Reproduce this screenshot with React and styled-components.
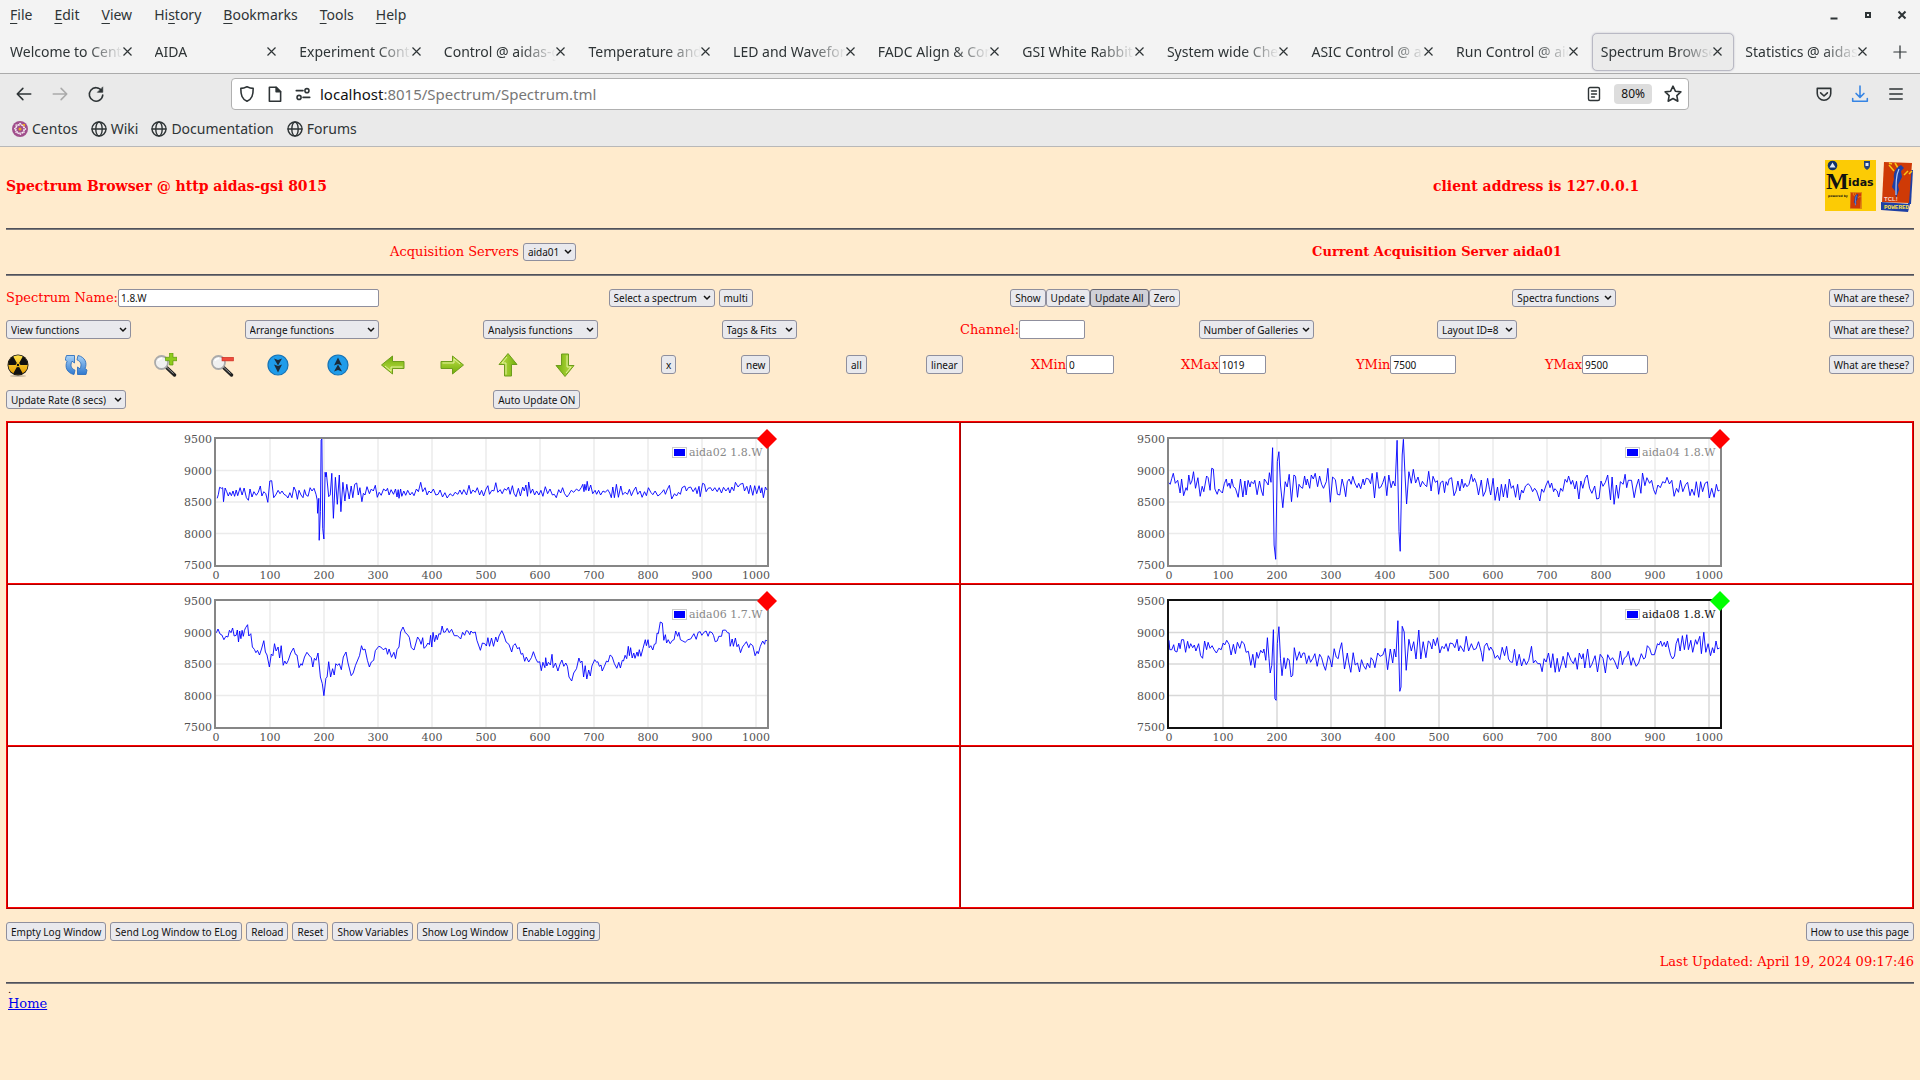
import React from "react";
import styled, { createGlobalStyle } from "styled-components";

const UI = '"Noto Sans", "Open Sans", sans-serif';
const PAGE = '"DejaVu Serif", "Liberation Serif", serif';

const Global = createGlobalStyle`
  * { box-sizing: border-box; }
  html, body { margin: 0; background: #ffebcd; }
  body { font-family: ${PAGE}; font-size: 13px; line-height: 16px; color: #f00; }
  button, input, select { font-family: ${UI}; margin: 0; }
`;

/* ---------- browser chrome ---------- */
const Chrome = styled.header`
  background: #f3f3f3;
  color: #2e3436;
  font: 14px/20px ${UI};
`;
const MenuBar = styled.div`
  display: flex;
  align-items: center;
  justify-content: space-between;
  height: 30px;
  padding: 0 10px 1px;
`;
const Group = styled.div`
  display: flex;
  align-items: center;
  gap: ${(p) => p.$gap ?? 4}px;
`;
const PlainButton = styled.button`
  border: 0;
  padding: 0;
  background: none;
  color: ${(p) => p.$color || "inherit"};
  font: inherit;
  display: flex;
  align-items: center;
  justify-content: center;
  gap: 4px;
  u { text-underline-offset: 3px; }
`;
const TabStrip = styled.div`
  display: flex;
  align-items: center;
  height: 43px;
`;
const Tab = styled.div`
  flex: 1;
  min-width: 0;
  display: flex;
  align-items: center;
  height: 38px;
  margin: 0 1px;
  padding: 0 11px 0 8px;
  border: 1px solid ${(p) => (p.$active ? "#b9b9c4" : "transparent")};
  border-radius: 5px;
  background: ${(p) => (p.$active ? "#ebebeb" : "transparent")};
  box-shadow: ${(p) => (p.$active ? "0 0 2px #b9b9c4" : "none")};
`;
const TabLabel = styled.span`
  flex: 1;
  overflow: hidden;
  white-space: nowrap;
  mask-image: linear-gradient(to left, transparent, #000 36px);
`;
const NewTab = styled(PlainButton)`
  width: 40px;
`;
const NavBar = styled.div`
  display: grid;
  grid-template-columns: 216px 1fr 216px;
  align-items: center;
  height: 40px;
  padding: 0 15px;
  background: #eaeaea;
  border-top: 1px solid #ababab;
`;
const NavRight = styled.div`
  display: flex;
  justify-content: flex-end;
  gap: 18px;
`;
const UrlBox = styled.div`
  display: flex;
  align-items: center;
  gap: 8px;
  height: 32px;
  padding: 0 6px;
  background: #fff;
  border: 1px solid #b0b0b0;
  border-radius: 4px;
`;
const UrlText = styled.span`
  flex: 1;
  font-size: 15px;
  color: #777;
  b { color: #111; font-weight: 400; }
`;
const ZoomLevel = styled.button`
  border: 0;
  border-radius: 4px;
  padding: 0 7px;
  height: 20px;
  background: #ddd;
  font-size: 12px;
  color: #111;
`;
const Bookmarks = styled.nav`
  display: flex;
  align-items: center;
  gap: 13px;
  height: 34px;
  padding: 0 12px 1px;
  background: #eaeaea;
  border-bottom: 1px solid #b8b8b8;
`;
const Bookmark = styled.a`
  display: flex;
  align-items: center;
  gap: 4px;
  color: inherit;
  text-decoration: none;
`;

/* ---------- page ---------- */
const Page = styled.main`
  padding: 13px 6px 0;
`;
const Title = styled.h1`
  margin: 0;
  font-size: 14px;
  line-height: 20px;
`;
const TitleRow = styled.div`
  display: grid;
  grid-template-columns: 1427fr 481fr;
  align-items: center;
  height: 52px;
  margin-bottom: 16px;
`;
const Spread = styled.div`
  display: flex;
  align-items: center;
  justify-content: space-between;
`;
const Rule = styled.hr`
  height: 2px;
  margin: 0;
  border: 0;
  border-top: 1px solid #50515a;
  border-bottom: 1px solid #7c7a7c;
`;
const ServerRow = styled.div`
  display: grid;
  grid-template-columns: 1fr 1fr;
  place-items: center;
  height: 44px;
`;
const Row = styled.div`
  display: grid;
  grid-template-columns: ${(p) => p.$cols};
  align-items: center;
  height: ${(p) => p.$h}px;
`;
const End = styled.div`
  display: flex;
  justify-content: flex-end;
`;
const Button = styled.button`
  height: ${(p) => p.$h || 19}px;
  padding: 0 4px;
  white-space: nowrap;
  font-size: 10px;
  line-height: 14px;
  color: #111;
  background: ${(p) => (p.$active ? "#d0d0d7" : "#e9e9ed")};
  border: 1px solid ${(p) => (p.$active ? "#676774" : "#8f8f9d")};
  border-radius: 3px;
`;
const SelectWrap = styled.span`
  display: inline-grid;
  align-items: center;
  width: ${(p) => p.$w}px;
  > * { grid-area: 1 / 1; }
  > svg { justify-self: end; margin-right: 4px; pointer-events: none; }
`;
const SelectBox = styled.select`
  appearance: none;
  width: 100%;
  height: ${(p) => p.$h || 19}px;
  padding: 0 4px;
  font-size: 10px;
  line-height: 14px;
  color: #111;
  background: #e9e9ed;
  border: 1px solid #8f8f9d;
  border-radius: 3px;
`;
const Field = styled.label`
  display: flex;
  align-items: center;
  white-space: nowrap;
`;
const Input = styled.input`
  width: ${(p) => p.$w}px;
  height: ${(p) => p.$h || 19}px;
  padding: 0 2px;
  font-size: 10px;
  color: #111;
  background: #fff;
  border: 1px solid #8f8f9d;
  border-radius: 2px;
`;
const Gallery = styled.table`
  width: 100%;
  margin-top: 12px;
  table-layout: fixed;
  border-spacing: 0;
  background: #fff;
  border: 1px solid;
  border-color: #f00 #a00 #a00 #f00;
`;
const Cell = styled.td`
  height: 162px;
  padding: 0;
  border: 1px solid;
  border-color: #a00 #f00 #f00 #a00;
`;
const Plot = styled.svg`
  display: block;
  width: 600px;
  height: 160px;
  margin: 0 auto;
  font: 11px ${PAGE};
`;
const LogRow = styled(Spread)`
  margin-top: 13px;
`;
const Updated = styled.p`
  margin: 13px 0 12px;
  text-align: right;
`;
const Foot = styled.footer`
  padding: 1px 2px;
  color: #000;
  a { display: block; color: #00e; }
`;
const Dot = styled.div`
  height: 11px;
  font-size: 10px;
  line-height: 10px;
`;

/* ---------- small drawings ---------- */
const Ico = ({ children, s = 18, w = 1.4 }) => (
  <svg width={s} height={s} viewBox="0 0 16 16" fill="none" stroke="currentColor" strokeWidth={w} strokeLinecap="round" strokeLinejoin="round">{children}</svg>
);
const Cross = () => <svg width="9" height="9" viewBox="0 0 9 9" stroke="#2e3436" strokeWidth="1.2"><path d="M.5.5l8 8M8.5.5l-8 8" /></svg>;
const Globe = () => <Ico s={16} w={1.4}><circle cx="8" cy="8" r="7" /><ellipse cx="8" cy="8" rx="3.2" ry="7" /><path d="M1 8h14" /></Ico>;
const Chevron = () => <svg width="8" height="6" viewBox="0 0 8 6" fill="none" stroke="#111" strokeWidth="1.5"><path d="M1 1l3 3 3-3" /></svg>;
const CentosMark = () => (
  <svg width="16" height="16" viewBox="0 0 16 16">
    <circle cx="8" cy="8" r="8" fill="#a14f8c" />
    <g fill="none" stroke="#fff" strokeWidth="1.1" strokeDasharray="1.6 .8">
      <rect x="4" y="4" width="8" height="8" /><rect x="4" y="4" width="8" height="8" transform="rotate(45 8 8)" />
    </g>
    <circle cx="8" cy="8" r="1.5" fill="#efa724" /><path d="M10 3l3 0 0 3z" fill="#efa724" />
  </svg>
);

const DefsSvg = styled.svg`
  display: block;
`;
const Defs = () => (
  <DefsSvg width="0" height="0" aria-hidden="true">
    <defs>
      <linearGradient id="green" x1="0" y1="0" x2="0" y2="1"><stop offset="0" stopColor="#c4e04a" /><stop offset="1" stopColor="#6fae0a" /></linearGradient>
      <linearGradient id="sky" x1="0" y1="0" x2="0" y2="1"><stop offset="0" stopColor="#a9d2f7" /><stop offset="1" stopColor="#2f79cf" /></linearGradient>
      <linearGradient id="amber" x1="0" y1="0" x2="0" y2="1"><stop offset="0" stopColor="#ffe14a" /><stop offset="1" stopColor="#e39a00" /></linearGradient>
    </defs>
  </DefsSvg>
);
const GreenArrow = ({ turn }) => (
  <>
    <path d="M1 8.500h11.500V3L23.500 12l-11 9v-5.500H1z" fill="url(#green)" stroke="#6d9d1c" transform={`rotate(${turn} 12 12)`} />
    <path d="M2.500 10h11.500V6l6 5" fill="none" stroke="#e6f3a8" strokeWidth=".9" transform={`rotate(${turn} 12 12)`} />
  </>
);
const Lens = ({ sign }) => (
  <>
    <path d="M13 14l8.500 8" stroke="#222" strokeWidth="3.400" strokeLinecap="round" />
    <path d="M14 14.500l6.500 6" stroke="#bbb" strokeWidth=".8" />
    <circle cx="8.500" cy="9.500" r="6.500" fill="#f0f0f0" stroke="#aaa" strokeWidth="1.800" />
    <path d="M5 8a4 4 0 014-2.500" stroke="#fff" strokeWidth="1.500" fill="none" />
    {sign === "+"
      ? <path d="M16.500 0h3.500v4.300h4v3.400h-4V12h-3.500V7.700h-4V4.300h4z" fill="#8fcb1e" stroke="#5c9710" strokeWidth=".7" />
      : <rect x="12" y="4.300" width="11.500" height="3.600" fill="#ef4a3c" stroke="#c9281c" strokeWidth=".6" />}
  </>
);
const Disc = ({ up }) => (
  <g transform={up ? "rotate(180 12 12)" : undefined}>
    <circle cx="12" cy="12" r="10" fill="#1f9cea" stroke="#1673b5" strokeWidth="1.200" />
    <path d="M8 5.500l4 1.500 4-1.500-4 7zM8 11.500l4 1.500 4-1.500-4 8z" fill="#1b2b3a" />
  </g>
);
const TOOLS = [
  ["Clear", <g key="r"><ellipse cx="12" cy="23" rx="8" ry="1" fill="#0003" /><circle cx="12" cy="12" r="10.500" fill="#111" /><circle cx="12" cy="12" r="9.700" fill="url(#amber)" /><path d="M12 12L7.200 3.600a9.700 9.700 0 00-4.900 8.400zM12 12h9.700a9.700 9.700 0 00-4.900-8.400zM12 12l-4.800 8.400a9.700 9.700 0 009.600 0z" fill="#111" /><circle cx="12" cy="12" r="1.800" fill="#111" stroke="#f5bf10" /></g>],
  ["Refresh", <g key="f" fill="url(#sky)" stroke="#2f6fbd" strokeWidth=".9"><path d="M10 21.500C3 20 .5 14 3 8.500L1.500 7l0-1.500L2.500 2.500H10.500V10L8 8.200c-2 4-1 7.300 3 9z" /><path d="M14 2.500c7 1.500 9.500 7.500 7 13l2 1.500-1 4.500H13.500V14l2.500 1.800c2-4 1-7.300-3-9z" /></g>],
  ["Zoom in", <Lens key="i" sign="+" />],
  ["Zoom out", <Lens key="o" sign="-" />],
  ["Compress", <Disc key="c" />],
  ["Expand", <Disc key="e" up />],
  ["Left", <GreenArrow key="l" turn={180} />],
  ["Right", <GreenArrow key="g" turn={0} />],
  ["Up", <GreenArrow key="u" turn={-90} />],
  ["Down", <GreenArrow key="d" turn={90} />],
];

const Feather = () => (
  <>
    <path d="M3 2L31 3 28 43 1 42z" fill="#cf3a06" />
    <path d="M8 5l5 6M14 3l3 5M27 11l-4 4M31 11l-3 3M8 3l3 1" stroke="#f7c51a" strokeWidth="1.500" />
    <path d="M20 5c-6 3-8 9-7 14l-2 8 3 4 1 7 3-8-1-5 4-8-1-6 3-3z" fill="#1d3fa5" />
    <path d="M18 9c-3 6-3 14-3 26" stroke="#b8cdf5" strokeWidth="1.200" fill="none" />
  </>
);
const Logos = () => (
  <svg width="90" height="52" viewBox="0 0 90 52" role="img" aria-label="Midas, Tcl powered">
    <rect x="1" width="51" height="51" fill="#fccb05" />
    <circle cx="8.500" cy="5.500" r="4.800" fill="#12336b" /><path d="M5.500 7.500l3-5 3 5z" fill="#dfe8f5" />
    <path d="M40 1h6v5c0 2-2 3-3 4-1-1-3-2-3-4z" fill="#24427a" /><path d="M41.500 3h3v3h-3z" fill="#dfe8f5" />
    <text x="2" y="29" fontFamily="Liberation Serif" fontWeight="700" fontSize="24" fill="#111">M</text>
    <text x="24" y="26" fontFamily="DejaVu Sans" fontWeight="700" fontSize="11" fill="#111">idas</text>
    <text x="4" y="37" fontFamily="DejaVu Sans" fontWeight="700" fontSize="3" fill="#111">powered by</text>
    <rect x="26" y="32" width="12" height="17" fill="#e08a10" />
    <g transform="translate(26 32) scale(.36 .38)"><Feather /></g>
    <g transform="translate(57 0)">
      <path d="M29 10h3l-2 34h-3z" fill="#1d3fa5" />
      <Feather />
      <path d="M0 42l29 2-2 8L0 50z" fill="#1d3fa5" />
      <text x="3" y="41" fontFamily="Liberation Sans" fontWeight="700" fontSize="6" fill="#f6d9cf">TCL!</text>
      <text x="3" y="49" fontFamily="Liberation Mono" fontWeight="700" fontSize="6" fill="#ffe14a">POWERED</text>
    </g>
  </svg>
);

/* ---------- spectra ---------- */
const TRACES = {
  aida02: "120,250 123,238 126,217 131,220 134,218 136,260 140,219 144,230 148,243 152,232 156,242 160,228 164,244 168,225 172,242 178,218 183,240 188,219 194,248 199,256 203,222 208,246 213,230 219,241 224,232 229,213 233,243 238,230 243,236 248,262 253,198 258,197 263,248 268,240 274,226 279,236 284,228 289,238 295,242 299,249 304,233 309,248 314,216 319,228 323,253 327,226 332,240 337,248 341,224 345,240 350,244 355,218 360,228 365,220 370,238 373,255 374,295 377,250 378,376 381,290 383,75 385,72 387,340 390,372 393,172 395,186 396,172 402,245 406,240 410,175 414,310 419,187 424,268 429,180 433,290 438,202 443,258 448,208 454,252 459,213 463,248 468,208 473,204 477,240 481,218 486,260 490,235 494,240 499,215 505,236 510,222 515,228 520,211 525,247 530,232 535,241 541,222 547,228 551,220 555,240 560,224 566,238 571,222 575,246 578,224 580,250 584,222 587,244 592,228 597,241 602,226 608,240 613,232 618,242 624,222 629,230 635,202 640,230 646,218 651,240 656,228 661,234 667,222 673,240 679,238 684,225 690,246 696,233 702,249 709,236 716,243 722,232 729,238 734,225 739,238 744,224 751,240 757,211 762,236 767,225 773,232 778,218 784,240 789,226 794,243 800,222 805,212 809,238 815,226 820,228 825,203 830,232 836,224 841,236 847,221 852,226 857,216 861,238 867,212 871,235 876,245 882,220 887,243 893,216 897,228 901,210 905,244 908,201 913,235 918,222 923,240 928,228 934,240 939,226 944,244 950,215 956,236 962,222 968,240 973,238 978,248 984,224 989,234 994,218 999,236 1005,246 1010,238 1016,226 1022,232 1029,222 1035,228 1041,218 1045,208 1048,230 1050,208 1053,226 1056,199 1060,228 1065,210 1070,236 1076,226 1080,238 1085,226 1090,240 1096,228 1102,232 1108,224 1113,234 1117,248 1121,216 1125,248 1130,208 1135,247 1141,213 1146,239 1152,232 1158,238 1163,223 1168,242 1173,228 1179,216 1184,238 1190,228 1195,247 1201,230 1206,242 1211,218 1217,232 1222,239 1228,228 1235,243 1243,235 1250,224 1254,238 1258,225 1264,211 1270,252 1277,236 1282,243 1287,232 1292,238 1296,218 1303,213 1307,228 1312,218 1318,216 1324,230 1330,218 1334,236 1339,214 1342,245 1348,205 1353,208 1357,230 1362,220 1368,218 1373,228 1379,218 1385,230 1390,218 1396,234 1401,217 1407,228 1413,218 1417,234 1422,216 1427,227 1431,202 1438,216 1443,208 1450,205 1454,228 1460,214 1465,236 1469,211 1475,241 1480,212 1485,236 1491,212 1495,234 1498,218 1502,248 1507,216 1511,225",
  aida04: "124,203 127,208 131,190 135,175 140,205 146,196 152,234 156,192 161,242 167,218 170,226 174,180 178,208 182,198 186,170 191,220 197,188 203,244 208,214 212,230 219,183 223,188 228,226 232,160 236,162 240,222 246,238 250,222 254,228 259,234 264,206 269,192 272,214 276,204 279,220 283,192 287,215 292,220 299,247 305,192 311,246 316,198 319,240 324,196 329,216 332,200 338,206 341,196 347,239 353,198 358,228 362,242 365,192 370,200 375,210 378,173 382,202 386,98 390,390 394,433 398,140 402,110 406,210 412,278 418,200 423,216 428,178 434,260 440,180 444,184 449,247 453,208 457,216 462,220 467,183 471,210 474,192 480,220 484,180 489,192 494,175 500,215 505,183 510,208 515,220 522,200 526,160 532,262 538,186 545,194 550,238 556,240 562,192 567,216 571,245 575,200 580,192 585,208 589,184 594,204 600,218 604,205 609,221 615,192 618,210 623,190 629,192 634,206 638,175 644,249 650,172 655,220 660,216 665,203 670,184 675,242 680,180 686,218 691,198 696,213 701,76 706,350 709,409 714,120 717,73 721,180 725,267 731,170 737,205 742,163 748,204 754,186 760,216 765,199 770,208 776,215 781,169 787,228 792,184 798,202 803,197 806,238 811,203 817,198 821,233 825,200 829,211 833,192 839,188 845,242 850,228 855,198 860,228 865,192 869,218 873,205 878,215 883,208 889,178 893,200 897,190 902,206 907,240 914,195 919,244 925,228 930,190 935,224 938,240 944,190 949,256 955,216 960,257 965,208 970,246 975,208 980,248 985,192 990,220 995,212 1001,247 1006,208 1011,255 1016,225 1020,234 1026,213 1033,206 1039,215 1044,230 1049,220 1054,228 1062,258 1067,222 1072,232 1078,210 1083,197 1088,218 1092,204 1097,230 1100,221 1106,228 1110,246 1115,220 1120,229 1126,193 1131,202 1135,183 1141,208 1145,196 1151,222 1155,199 1161,252 1166,198 1171,220 1177,190 1182,180 1188,220 1194,235 1201,213 1206,252 1212,250 1217,198 1222,214 1228,202 1234,180 1241,255 1245,186 1250,268 1256,210 1261,250 1266,200 1273,208 1278,178 1282,218 1286,196 1294,196 1301,248 1306,216 1312,192 1318,235 1322,174 1328,212 1333,188 1340,205 1345,196 1350,224 1355,238 1361,210 1367,218 1373,200 1379,204 1384,187 1390,207 1396,196 1402,244 1408,220 1413,232 1418,196 1424,230 1431,209 1436,202 1442,242 1447,222 1453,241 1458,200 1464,247 1469,200 1474,230 1480,205 1486,200 1491,249 1497,220 1503,247 1509,208 1513,228 1517,226",
  aida06: "118,157 122,146 127,161 132,164 137,178 142,168 147,170 151,150 155,157 159,143 163,167 168,165 171,149 174,185 177,152 180,175 183,150 186,168 189,150 192,142 197,133 200,167 205,160 209,200 214,207 218,217 222,210 227,224 232,206 238,181 242,215 246,224 252,260 257,221 261,226 265,190 269,212 274,200 278,233 282,196 287,255 291,242 295,251 300,240 306,218 313,203 318,222 322,224 327,262 332,250 335,255 341,230 347,216 354,227 358,232 362,260 366,234 370,240 375,218 381,290 386,310 390,346 395,294 398,290 402,244 407,290 412,265 416,284 420,250 424,255 429,250 434,268 439,230 446,215 451,248 459,286 464,278 470,255 480,226 485,196 489,209 494,206 500,240 505,260 510,245 516,240 520,211 529,198 534,200 540,208 547,203 551,222 555,206 561,231 567,216 571,235 575,208 580,200 584,155 590,140 596,157 601,162 606,171 611,202 618,209 627,170 632,179 636,192 640,172 643,204 648,199 653,188 657,193 660,165 663,200 666,156 670,184 674,164 677,178 681,160 685,162 689,137 693,156 697,155 702,144 707,157 713,147 720,166 728,166 736,176 741,156 746,165 750,151 754,152 759,163 762,152 767,158 773,155 777,180 786,210 791,188 797,190 801,197 805,172 809,198 814,173 819,198 825,170 829,185 833,167 840,151 845,164 851,185 858,192 865,215 869,196 874,190 880,206 884,201 889,222 893,219 898,243 902,230 908,245 915,232 920,214 926,235 931,246 936,244 940,271 944,246 949,262 951,232 954,257 958,246 963,254 967,222 970,262 976,248 982,272 987,252 992,239 997,258 1002,248 1006,258 1010,290 1017,302 1022,278 1029,265 1035,233 1039,247 1043,242 1047,290 1051,256 1055,296 1060,269 1064,287 1068,257 1075,238 1080,246 1083,244 1087,258 1091,254 1094,272 1099,259 1105,242 1109,245 1114,224 1119,229 1125,250 1131,264 1136,246 1140,263 1145,240 1148,242 1152,225 1156,235 1160,198 1163,226 1166,202 1170,233 1174,218 1177,234 1182,215 1185,228 1188,208 1192,228 1197,205 1203,178 1206,196 1210,178 1213,202 1217,196 1222,209 1226,192 1230,190 1233,158 1236,160 1241,125 1246,128 1250,180 1254,163 1257,188 1261,178 1266,190 1272,180 1276,178 1280,152 1285,168 1288,156 1292,178 1298,182 1304,186 1311,178 1318,176 1326,160 1332,177 1337,156 1342,154 1346,165 1352,155 1357,152 1362,168 1366,154 1372,157 1376,166 1380,184 1385,182 1389,168 1396,168 1399,150 1406,149 1411,157 1415,158 1418,198 1423,176 1426,198 1431,173 1435,199 1439,192 1444,217 1449,200 1454,192 1459,184 1465,202 1469,190 1475,196 1481,226 1486,213 1489,220 1494,198 1500,182 1505,192 1507,180 1511,181",
  aida08: "124,180 126,208 131,208 136,193 139,212 144,215 149,188 152,205 156,178 161,178 166,216 171,183 175,204 179,190 184,202 188,194 192,212 199,190 204,226 209,234 214,182 219,208 223,186 228,204 233,196 238,208 244,218 250,204 256,208 261,188 265,194 270,180 276,192 281,224 287,192 292,220 297,186 303,204 308,183 314,190 319,216 325,213 331,255 336,222 341,262 346,216 350,234 356,210 361,218 364,206 369,240 373,172 377,235 380,278 384,255 388,148 392,355 395,360 398,190 402,139 406,235 410,286 415,232 419,265 424,234 428,239 433,290 437,285 441,202 447,240 454,214 458,233 463,218 467,218 472,250 478,226 482,246 488,234 493,220 499,258 505,222 510,232 515,254 520,270 527,226 531,236 536,260 542,205 547,230 552,235 556,208 561,187 568,266 575,218 579,248 584,276 590,217 595,254 601,248 606,275 611,238 616,256 622,267 626,248 632,262 635,232 640,240 645,262 652,218 658,228 665,224 671,204 677,268 684,206 690,248 694,206 698,230 703,121 708,333 711,320 714,138 719,155 724,270 731,177 737,212 743,184 749,236 756,149 761,236 767,184 774,232 780,182 784,186 789,206 793,176 798,196 803,172 809,218 815,198 820,205 825,190 830,213 835,188 842,190 847,202 853,177 857,212 861,196 865,204 870,214 876,168 882,212 889,190 895,208 901,205 907,184 914,216 918,243 922,198 928,188 934,210 938,200 944,212 949,234 955,225 961,238 967,201 973,226 978,198 983,236 988,245 993,246 998,207 1004,256 1010,222 1016,257 1022,235 1028,253 1034,240 1041,198 1046,248 1051,240 1057,250 1063,250 1068,274 1073,235 1078,245 1084,218 1090,262 1095,220 1101,276 1106,234 1111,274 1117,250 1121,228 1128,262 1133,216 1141,240 1147,250 1152,232 1157,267 1162,218 1168,236 1172,220 1176,263 1183,206 1189,262 1194,252 1202,226 1208,275 1215,222 1222,234 1228,278 1234,223 1241,240 1246,232 1251,242 1259,266 1266,212 1271,253 1276,233 1282,228 1286,213 1293,255 1298,232 1306,258 1312,248 1319,220 1325,236 1329,232 1334,196 1340,204 1345,223 1352,223 1360,190 1364,194 1368,182 1372,198 1377,186 1381,200 1385,182 1388,200 1393,225 1398,236 1403,227 1407,190 1412,174 1417,212 1423,166 1428,208 1434,163 1438,208 1444,180 1449,216 1456,178 1460,192 1467,168 1471,220 1477,156 1482,216 1488,190 1494,226 1499,202 1503,218 1508,182 1512,206 1517,203",
};

const LEFT = 32, TOP = 16, W = 551, H = 126;
const trace = (name, x0, y0) =>
  TRACES[name].split(" ").map((p) => {
    const [x, y] = p.split(",");
    return `${(LEFT + ((x - x0) / 1394) * W).toFixed(1)},${(TOP + ((y - y0) / 378) * H).toFixed(1)}`;
  }).join(" ");

function Spectrum({ name, label, x0, y0, selected }) {
  const frame = selected ? "#111" : "#868686";
  const grid = selected ? "#d8d8d8" : "#ebebeb";
  return (
    <Plot viewBox="0 0 600 160" role="img" aria-label={label}>
      {[...Array(10)].map((_, i) => <path key={i} d={`M${LEFT + (i + 1) * 54} ${TOP}v${H}`} stroke={grid} strokeWidth="1.500" />)}
      {[1, 2, 3].map((i) => <path key={i} d={`M${LEFT} ${TOP + i * 31.5}h${W}`} stroke={grid} strokeWidth="1.500" />)}
      <rect x={LEFT - 1} y={TOP - 1} width={W + 2} height={H + 2} fill="none" stroke={frame} strokeWidth="2" />
      <polyline points={trace(name, x0, y0)} fill="none" stroke="#00f" strokeOpacity=".9" strokeWidth="1" strokeLinejoin="round" />
      <g fill="#545454">
        {[9500, 9000, 8500, 8000, 7500].map((v, i) => <text key={v} x={LEFT - 4} y={TOP + i * 31.5 + 4} textAnchor="end">{v}</text>)}
        {[...Array(11)].map((_, i) => <text key={i} x={LEFT + i * 54} y={TOP + H + 14} textAnchor="middle">{i * 100}</text>)}
      </g>
      <rect x="488.500" y="24.500" width="14" height="10" fill="#fff" stroke="#ccc" />
      <rect x="490" y="26" width="11" height="7" fill="#00f" />
      <text x="505" y="33" fill={selected ? "#111" : "#888"}>{label}</text>
      <path d={`M${LEFT + W} 6l10 10-10 10-10-10z`} fill={selected ? "#0f0" : "#f00"} />
    </Plot>
  );
}

const Select = ({ label, w, h }) => (
  <SelectWrap $w={w}>
    <SelectBox $h={h} aria-label={label} defaultValue={label}><option>{label}</option></SelectBox>
    <Chevron />
  </SelectWrap>
);
const LabeledInput = ({ label, value = "", w, h }) => (
  <Field>{label}<Input $w={w} $h={h} defaultValue={value} /></Field>
);
const Help = ({ h }) => <End><Button $h={h}>What are these?</Button></End>;

const MENUS = [["", "F", "ile"], ["", "E", "dit"], ["", "V", "iew"], ["Hi", "s", "tory"], ["", "B", "ookmarks"], ["", "T", "ools"], ["", "H", "elp"]];
const TABS = ["Welcome to CentOS", "AIDA", "Experiment Control", "Control @ aidas-gsi", "Temperature and", "LED and Waveform", "FADC Align & Contr", "GSI White Rabbit", "System wide Check", "ASIC Control @ aid", "Run Control @ aida", "Spectrum Browser", "Statistics @ aidas-"];
const TOOL_COLS = [58, 89, 57, 56, 60, 55, 59, 56, 57, 108, 80, 105, 80, 105, 150, 175, 189, 369].map((n) => `minmax(0, ${n}fr)`).join(" ");

export default function App() {
  return (
    <>
      <Global />
      <Defs />
      <Chrome>
        <MenuBar>
          <Group $gap={22}>
            {MENUS.map(([a, b, c]) => <PlainButton key={b + c}><span>{a}<u>{b}</u>{c}</span></PlainButton>)}
          </Group>
          <Group $gap={18}>
            <PlainButton aria-label="Minimize"><Ico s={16}><path d="M4.500 11.500h7" strokeWidth="2" strokeLinecap="butt" /></Ico></PlainButton>
            <PlainButton aria-label="Maximize"><Ico s={16}><path d="M6 6h4v4H6z" strokeWidth="2" strokeLinejoin="miter" /></Ico></PlainButton>
            <PlainButton aria-label="Close"><Ico s={16}><path d="M4.500 4.500l7 7M11.500 4.500l-7 7" strokeWidth="2" strokeLinecap="butt" /></Ico></PlainButton>
          </Group>
        </MenuBar>
        <TabStrip>
          {TABS.map((t, i) => (
            <Tab key={t} $active={i === 11}><TabLabel>{t}</TabLabel><PlainButton aria-label={`Close ${t}`}><Cross /></PlainButton></Tab>
          ))}
          <NewTab aria-label="New tab"><Ico s={14}><path d="M8 1v14M1 8h14" /></Ico></NewTab>
        </TabStrip>
        <NavBar>
          <Group $gap={18}>
            <PlainButton aria-label="Back"><Ico><path d="M14 8H2M7 3L2 8l5 5" /></Ico></PlainButton>
            <PlainButton aria-label="Forward" $color="#aaa"><Ico><path d="M2 8h12M9 3l5 5-5 5" /></Ico></PlainButton>
            <PlainButton aria-label="Reload page"><Ico><path d="M13 5A6 6 0 1014 9" /><path d="M14 2v4.500H9.500z" fill="currentColor" strokeWidth=".6" /></Ico></PlainButton>
          </Group>
          <UrlBox>
            <Group $gap={10}>
              <Ico><path d="M8 1.500C6 2.500 4 3 2.500 3c0 6 1 9.500 5.500 11.500C12.500 12.500 13.500 9 13.500 3 12 3 10 2.500 8 1.500z" /></Ico>
              <Ico><path d="M3 2h6l4 4v8.500H3z" /><path d="M9 2v4h4z" fill="currentColor" /></Ico>
              <Ico><path d="M2 5h6M8 11h6" /><circle cx="11.500" cy="5" r="1.800" /><circle cx="4.500" cy="11" r="1.800" /></Ico>
            </Group>
            <UrlText><b>localhost</b>:8015/Spectrum/Spectrum.tml</UrlText>
            <Group $gap={12}>
              <PlainButton aria-label="Reader view"><Ico s={16}><rect x="2.500" y="1.500" width="11" height="13" rx="1.500" /><path d="M5.500 5h5M5.500 8h5M5.500 11h3" /></Ico></PlainButton>
              <ZoomLevel>80%</ZoomLevel>
              <PlainButton aria-label="Bookmark this page"><Ico><path d="M8 1l2.100 4.500 4.900.6-3.600 3.400.9 4.900L8 12l-4.300 2.400.9-4.900L1 6.100l4.900-.6z" /></Ico></PlainButton>
            </Group>
          </UrlBox>
          <NavRight>
            <PlainButton aria-label="Save to Pocket"><Ico><path d="M2 3h12v4.500a6 6 0 01-12 0zM5 7l3 2.800L11 7" /></Ico></PlainButton>
            <PlainButton aria-label="Downloads" $color="#3584e4"><Ico><path d="M8 1v9.500M4.500 7.500L8 11l3.500-3.500M1.500 12v2.500h13V12" /></Ico></PlainButton>
            <PlainButton aria-label="Menu"><Ico><path d="M2.500 3.500h11M2.500 8h11M2.500 12.500h11" /></Ico></PlainButton>
          </NavRight>
        </NavBar>
        <Bookmarks>
          {["Centos", "Wiki", "Documentation", "Forums"].map((b, i) => (
            <Bookmark key={b} href="#">{i ? <Globe /> : <CentosMark />}{b}</Bookmark>
          ))}
        </Bookmarks>
      </Chrome>

      <Page>
        <TitleRow>
          <Title>Spectrum Browser @ http aidas-gsi 8015</Title>
          <Spread><Title as="h2">client address is 127.0.0.1</Title><Logos /></Spread>
        </TitleRow>
        <Rule />
        <ServerRow>
          <Group>Acquisition Servers <Select label="aida01" w={53} h={18} /></Group>
          <b>Current Acquisition Server aida01</b>
        </ServerRow>
        <Rule />
        <Row $h={44} $cols="6fr 4fr 5fr 4fr">
          <LabeledInput label="Spectrum Name:" value="1.8.W" w={261} h={18} />
          <Group><Select label="Select a spectrum" w={106} h={18} /><Button $h={18}>multi</Button></Group>
          <Group $gap={0}><Button $h={18}>Show</Button><Button $h={18}>Update</Button><Button $h={18} $active>Update All</Button><Button $h={18}>Zero</Button></Group>
          <Spread><Select label="Spectra functions" w={104} h={18} /><Button $h={18}>What are these?</Button></Spread>
        </Row>
        <Row $h={19} $cols="repeat(8, minmax(0, 1fr))">
          <Select label="View functions" w={125} />
          <Select label="Arrange functions" w={134} />
          <Select label="Analysis functions" w={115} />
          <Select label="Tags & Fits" w={75} />
          <LabeledInput label="Channel:" w={66} />
          <Select label="Number of Galleries" w={115} />
          <Select label="Layout ID=8" w={80} />
          <Help />
        </Row>
        <Row $h={51} $cols={TOOL_COLS}>
          {TOOLS.map(([name, art]) => (
            <Group key={name}><PlainButton aria-label={name}><svg width="24" height="24" viewBox="0 0 24 24">{art}</svg></PlainButton></Group>
          ))}
          {["x", "new", "all", "linear"].map((b) => <Group key={b}><Button>{b}</Button></Group>)}
          <LabeledInput label="XMin" value="0" w={48} />
          <LabeledInput label="XMax" value="1019" w={47} />
          <LabeledInput label="YMin" value="7500" w={66} />
          <Spread><LabeledInput label="YMax" value="9500" w={66} /><Help /></Spread>
        </Row>
        <Row $h={19} $cols="12fr 35fr">
          <Select label="Update Rate (8 secs)" w={120} />
          <Group><Button>Auto Update ON</Button></Group>
        </Row>
        <Gallery>
          <tbody>
            <tr>
              <Cell><Spectrum name="aida02" label="aida02 1.8.W" x0={117} y0={72} /></Cell>
              <Cell><Spectrum name="aida04" label="aida04 1.8.W" x0={124} y0={72} /></Cell>
            </tr>
            <tr>
              <Cell><Spectrum name="aida06" label="aida06 1.7.W" x0={117} y0={62} /></Cell>
              <Cell><Spectrum name="aida08" label="aida08 1.8.W" x0={124} y0={62} selected /></Cell>
            </tr>
            <tr><Cell /><Cell /></tr>
          </tbody>
        </Gallery>
        <LogRow>
          <Group>
            {["Empty Log Window", "Send Log Window to ELog", "Reload", "Reset", "Show Variables", "Show Log Window", "Enable Logging"].map((b) => <Button key={b}>{b}</Button>)}
          </Group>
          <Button>How to use this page</Button>
        </LogRow>
        <Updated>Last Updated: April 19, 2024 09:17:46</Updated>
        <Rule />
        <Foot><Dot>.</Dot><a href="#">Home</a></Foot>
      </Page>
    </>
  );
}
